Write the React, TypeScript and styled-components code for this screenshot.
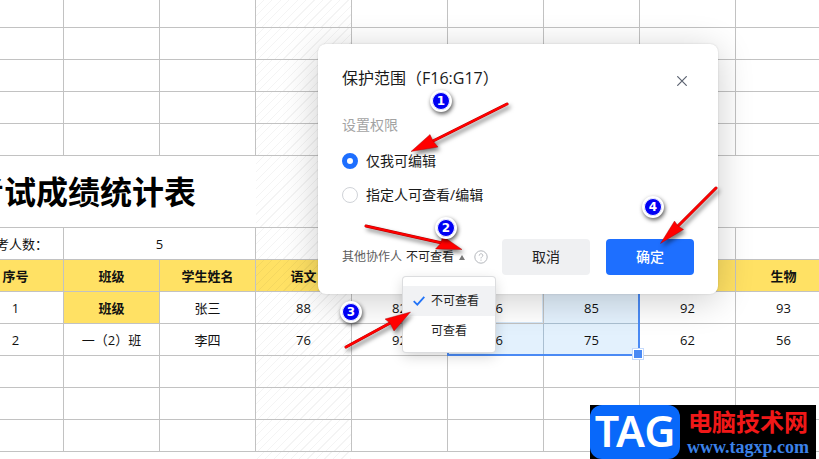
import React from "react";
import styled, { createGlobalStyle, css } from "styled-components";

const GlobalStyle = createGlobalStyle`
  * { box-sizing: border-box; }
  html, body { margin: 0; height: 100%; }
  body {
    overflow: hidden;
    background: #fff;
    color: #1a1a1a;
    font-family: "Open Sans", "Noto Sans CJK SC", sans-serif;
    font-size: 13px;
  }
  button, select, input { font: inherit; color: inherit; }
`;

const Page = styled.main`
  position: relative;
  height: 100vh;
  overflow: hidden;
`;

const Sheet = styled.table`
  width: 864px;
  margin-left: -32px;
  table-layout: fixed;
  border-collapse: separate;
  border-spacing: 0;
`;

const Row = styled.tr<{ $height?: number }>`
  height: ${(p) => p.$height ?? 32}px;
`;

const hatch = "repeating-linear-gradient(135deg, transparent 0 5px, rgba(0,0,0,0.045) 5px 6px)";

type CellProps = {
  $fill?: string;
  $hatched?: boolean;
  $open?: boolean;
  $selected?: boolean;
  $active?: boolean;
};

const cellStyle = css<CellProps>`
  padding: 0;
  overflow: hidden;
  white-space: nowrap;
  line-height: 20px;
  text-align: center;
  color: #111;
  border-right: 1px solid ${(p) => (p.$open ? "transparent" : p.$selected ? "#aabfd1" : "#c2c2c2")};
  border-bottom: 1px solid ${(p) => (p.$selected ? "#aabfd1" : "#c2c2c2")};
  background-color: ${(p) => (p.$selected ? "#e3f1fd" : p.$fill ?? "#fff")};
  background-image: ${(p) => (p.$hatched ? hatch : "none")};
  background-clip: ${(p) => (p.$open ? "border-box" : "padding-box")};
  ${(p) => p.$active && "box-shadow: inset -1px -1px #d5e8fa;"}
`;

const Cell = styled.td<CellProps>`
  ${cellStyle}
`;

const HeadCell = styled.th<CellProps>`
  ${cellStyle}
  font-weight: 700;
`;

const TitleCell = styled.td`
  padding: 0 60px 0 0;
  overflow: hidden;
  direction: rtl;
  white-space: nowrap;
  font-size: 32px;
  line-height: 48px;
  font-weight: 700;
  color: #000;
  border-bottom: 1px solid #c2c2c2;
`;

const Selection = styled.div`
  position: absolute;
  left: 447px;
  top: 291px;
  width: 193px;
  height: 65px;
  border: 2px solid #4a8af4;
  pointer-events: none;
  &::after {
    content: "";
    position: absolute;
    right: -6px;
    bottom: -6px;
    width: 10px;
    height: 10px;
    background: #4a8af4;
    border: 1px solid #c5dafc;
    box-shadow: inset 0 0 0 1px #fff;
  }
`;

const Dialog = styled.section`
  position: absolute;
  left: 318px;
  top: 44px;
  width: 400px;
  padding: 24px 24px 19px;
  display: flex;
  flex-direction: column;
  background: #fff;
  border-radius: 8px;
  box-shadow: 0 0 2px rgba(0, 0, 0, 0.15), 0 6px 36px rgba(0, 0, 0, 0.2);
`;

const DialogHead = styled.header`
  display: flex;
  align-items: center;
  justify-content: space-between;
  height: 26px;
`;

const DialogTitle = styled.h2`
  margin: 0;
  padding-bottom: 6px;
  font-size: 16px;
  line-height: 20px;
  font-weight: 400;
  white-space: nowrap;
`;

const CloseButton = styled.button`
  display: flex;
  width: 24px;
  height: 24px;
  align-items: center;
  justify-content: center;
  padding: 0;
  border: 0;
  background: none;
  color: #5b6270;
`;

const Permissions = styled.fieldset`
  display: flex;
  flex-direction: column;
  gap: 14px;
  margin: 21px 0 0;
  padding: 0;
  border: 0;
  legend {
    padding: 0;
    margin-bottom: 16px;
    font-size: 14px;
    line-height: 20px;
    color: #a3a3a3;
  }
`;

const Option = styled.label`
  display: flex;
  align-items: center;
  gap: 8px;
  height: 20px;
  font-size: 14px;
  line-height: 20px;
`;

const Radio = styled.input`
  appearance: none;
  width: 16px;
  height: 16px;
  margin: 0;
  border: 1px solid #d0d3d8;
  border-radius: 50%;
  background: #fff;
  &:checked { border: 5px solid #1e6fff; }
`;

const DialogFoot = styled.footer`
  display: flex;
  align-items: center;
  gap: 16px;
  margin-top: 34px;
`;

const Others = styled.div`
  position: relative;
  display: flex;
  flex: 1;
  min-width: 0;
  align-items: center;
  gap: 4px;
  font-size: 12px;
  line-height: 20px;
  white-space: nowrap;
  color: #5c5c5c;
`;

const Picker = styled.button`
  display: flex;
  align-items: center;
  gap: 5px;
  padding: 0;
  border: 0;
  background: none;
  color: #222;
`;

const HelpButton = styled.button`
  display: flex;
  margin-left: 5px;
  padding: 0;
  border: 0;
  background: none;
  color: #b4b7bc;
`;

const Action = styled.button<{ $primary?: boolean }>`
  flex: none;
  width: 88px;
  height: 36px;
  padding: 0 0 2px;
  border: 0;
  border-radius: 4px;
  font-size: 14px;
  font-weight: ${(p) => (p.$primary ? 500 : 400)};
  color: ${(p) => (p.$primary ? "#fff" : "#222")};
  background: ${(p) => (p.$primary ? "#1e6fff" : "#eff0f2")};
`;

const Menu = styled.ul`
  position: absolute;
  left: 61px;
  top: 30px;
  width: 92px;
  margin: 0;
  padding: 9px 0 6px;
  list-style: none;
  background: #fff;
  border-radius: 3px;
  box-shadow: 0 0 0 1px #dcdddf, 0 4px 14px rgba(0, 0, 0, 0.18);
`;

const MenuItem = styled.button<{ $chosen?: boolean }>`
  display: flex;
  width: 100%;
  height: 30px;
  align-items: center;
  gap: 6px;
  padding: 0 0 0 10px;
  border: 0;
  color: #222;
  background: ${(p) => (p.$chosen ? "#f1f2f4" : "#fff")};
  svg { visibility: ${(p) => (p.$chosen ? "visible" : "hidden")}; }
`;

const Marker = styled.span<{ $x: number; $y: number }>`
  position: absolute;
  left: ${(p) => p.$x - 11}px;
  top: ${(p) => p.$y - 11}px;
  display: grid;
  place-items: center;
  width: 22px;
  height: 22px;
  border: 2px solid #fff;
  border-radius: 50%;
  background: #0000f4;
  background-clip: padding-box;
  box-shadow: 1px 2px 4px rgba(0, 0, 0, 0.65), inset 0 0 0 1px #fff;
  color: #fff;
  font: 700 12px/16px "DejaVu Sans", sans-serif;
`;

const Arrows = styled.svg`
  position: absolute;
  left: 0;
  top: 0;
  width: 819px;
  height: 459px;
  pointer-events: none;
  filter: drop-shadow(2px 3px 2px rgba(0, 0, 0, 0.5));
`;

const Brand = styled.aside`
  position: absolute;
  right: 3px;
  bottom: 0;
  display: flex;
  width: 226px;
  height: 54px;
  background: #000;
`;

const BrandMark = styled.strong`
  width: 90px;
  height: 54px;
  border-radius: 12px;
  background: #0868fa;
  color: #fff;
  font: 600 43px/52px "Noto Sans", sans-serif;
  text-align: center;
`;

const BrandText = styled.div`
  display: flex;
  flex: 1;
  flex-direction: column;
  align-items: center;
  white-space: nowrap;
`;

const BrandName = styled.span`
  font: 700 24px/32px "Noto Sans CJK SC", sans-serif;
  color: #f01818;
`;

const BrandLink = styled.a`
  font: 700 18px/20px "Liberation Serif", serif;
  color: #3b82e8;
  text-decoration: none;
`;

const YELLOW = "#ffe164";
const COLUMNS = [0, 1, 2, 3, 4, 5, 6, 7, 8];
const SUBJECTS = ["序号", "班级", "学生姓名", "语文", "数学", "英语", "物理", "化学", "生物"];
const RECORDS = [
  ["1", "班级", "张三", "88", "82", "86", "85", "92", "93"],
  ["2", "一（2）班", "李四", "76", "92", "76", "75", "62", "56"],
];

function BlankRow({ height }: { height?: number }) {
  return (
    <Row $height={height}>
      {COLUMNS.map((c) => (
        <Cell key={c} $hatched={c === 3} />
      ))}
    </Row>
  );
}

function Arrow({ tail, head }: { tail: string; head: string }) {
  return (
    <g fill="#ff0000" stroke="#a00000" strokeWidth="0.4">
      <path d={tail} fill="none" stroke="#b00000" strokeWidth="3" strokeLinecap="round" />
      <path d={tail} fill="none" stroke="#ff0000" strokeWidth="2.3" strokeLinecap="round" />
      <path d={head} />
    </g>
  );
}

function CheckIcon() {
  return (
    <svg width="12" height="10" viewBox="0 0 12 10" fill="none" stroke="#2374f7" strokeWidth="1.8">
      <path d="M0.7 5.2 4.3 8.6 11.3 0.8" />
    </svg>
  );
}

export default function App() {
  return (
    <>
      <GlobalStyle />
      <Page>
        <Sheet>
          <tbody>
            <BlankRow height={28} />
            <BlankRow />
            <BlankRow />
            <BlankRow />
            <BlankRow />
            <Row $height={72}>
              <TitleCell colSpan={3}>考试成绩统计表</TitleCell>
              <Cell $hatched $open />
              <Cell colSpan={5} $open />
            </Row>
            <Row>
              <Cell>参考人数：</Cell>
              <Cell colSpan={2}>5</Cell>
              <Cell $hatched />
              {COLUMNS.slice(4).map((c) => (
                <Cell key={c} />
              ))}
            </Row>
            <Row>
              {SUBJECTS.map((name, c) => (
                <HeadCell key={name} scope="col" $fill={YELLOW} $hatched={c === 3}>
                  {name}
                </HeadCell>
              ))}
            </Row>
            {RECORDS.map((record, r) => (
              <Row key={r}>
                {record.map((value, c) =>
                  r === 0 && c === 1 ? (
                    <HeadCell key={c} $fill={YELLOW}>{value}</HeadCell>
                  ) : (
                    <Cell
                      key={c}
                      $hatched={c === 3}
                      $active={r === 0 && c === 5}
                      $selected={c === 6 || (c === 5 && r === 1)}
                    >
                      {value}
                    </Cell>
                  )
                )}
              </Row>
            ))}
            <BlankRow />
            <BlankRow />
            <BlankRow />
            <Row>
              <Cell colSpan={3} $open />
              <Cell $hatched $open />
              <Cell colSpan={5} $open />
            </Row>
          </tbody>
        </Sheet>
        <Selection />

        <Dialog role="dialog" aria-labelledby="dialog-title">
          <DialogHead>
            <DialogTitle id="dialog-title">保护范围（F16:G17）</DialogTitle>
            <CloseButton type="button" aria-label="关闭">
              <svg width="10" height="10" viewBox="0 0 10 10" stroke="currentColor" strokeWidth="1.2">
                <path d="M0.3 0.3 9.7 9.7M9.7 0.3 0.3 9.7" />
              </svg>
            </CloseButton>
          </DialogHead>
          <Permissions>
            <legend>设置权限</legend>
            <Option>
              <Radio type="radio" name="permission" defaultChecked />
              仅我可编辑
            </Option>
            <Option>
              <Radio type="radio" name="permission" />
              指定人可查看/编辑
            </Option>
          </Permissions>
          <DialogFoot>
            <Others>
              <span>其他协作人</span>
              <Picker type="button" aria-haspopup="menu" aria-expanded="true">
                不可查看
                <svg width="6" height="5" viewBox="0 0 6 5" fill="#777">
                  <path d="M3 0 6 5H0Z" />
                </svg>
              </Picker>
              <HelpButton type="button" aria-label="帮助">
                <svg width="14" height="14" viewBox="0 0 14 14" fill="none" stroke="currentColor">
                  <circle cx="7" cy="7" r="6.2" />
                  <path d="M5.2 5.6C5.2 3.2 8.8 3.2 8.8 5.4 8.8 6.8 7 6.8 7 8.4M7 9.6V10.7" />
                </svg>
              </HelpButton>
              <Menu role="menu">
                <li role="none">
                  <MenuItem type="button" role="menuitem" $chosen><CheckIcon />不可查看</MenuItem>
                </li>
                <li role="none">
                  <MenuItem type="button" role="menuitem"><CheckIcon />可查看</MenuItem>
                </li>
              </Menu>
            </Others>
            <Action type="button">取消</Action>
            <Action type="button" $primary>确定</Action>
          </DialogFoot>
        </Dialog>

        <Arrows viewBox="0 0 819 459" aria-hidden="true">
          <Arrow tail="M507 104 432 141.500" head="M411 151.500 430 134.500 433 141 438 147Z" />
          <Arrow tail="M366 226 442 243" head="M462 249.500 442.500 236 441 243 435.500 249Z" />
          <Arrow tail="M346 347 392 322" head="M410.500 312 385 319 390 323 394 331Z" />
          <Arrow tail="M716 188 678 226" head="M660.500 243.500 674.500 221 678 226 683.500 229.500Z" />
        </Arrows>
        <Marker $x={441} $y={101}>1</Marker>
        <Marker $x={446} $y={228}>2</Marker>
        <Marker $x={351} $y={312}>3</Marker>
        <Marker $x={653} $y={207}>4</Marker>

        <Brand>
          <BrandMark>TAG</BrandMark>
          <BrandText>
            <BrandName>电脑技术网</BrandName>
            <BrandLink href="#">www.tagxp.com</BrandLink>
          </BrandText>
        </Brand>
      </Page>
    </>
  );
}
